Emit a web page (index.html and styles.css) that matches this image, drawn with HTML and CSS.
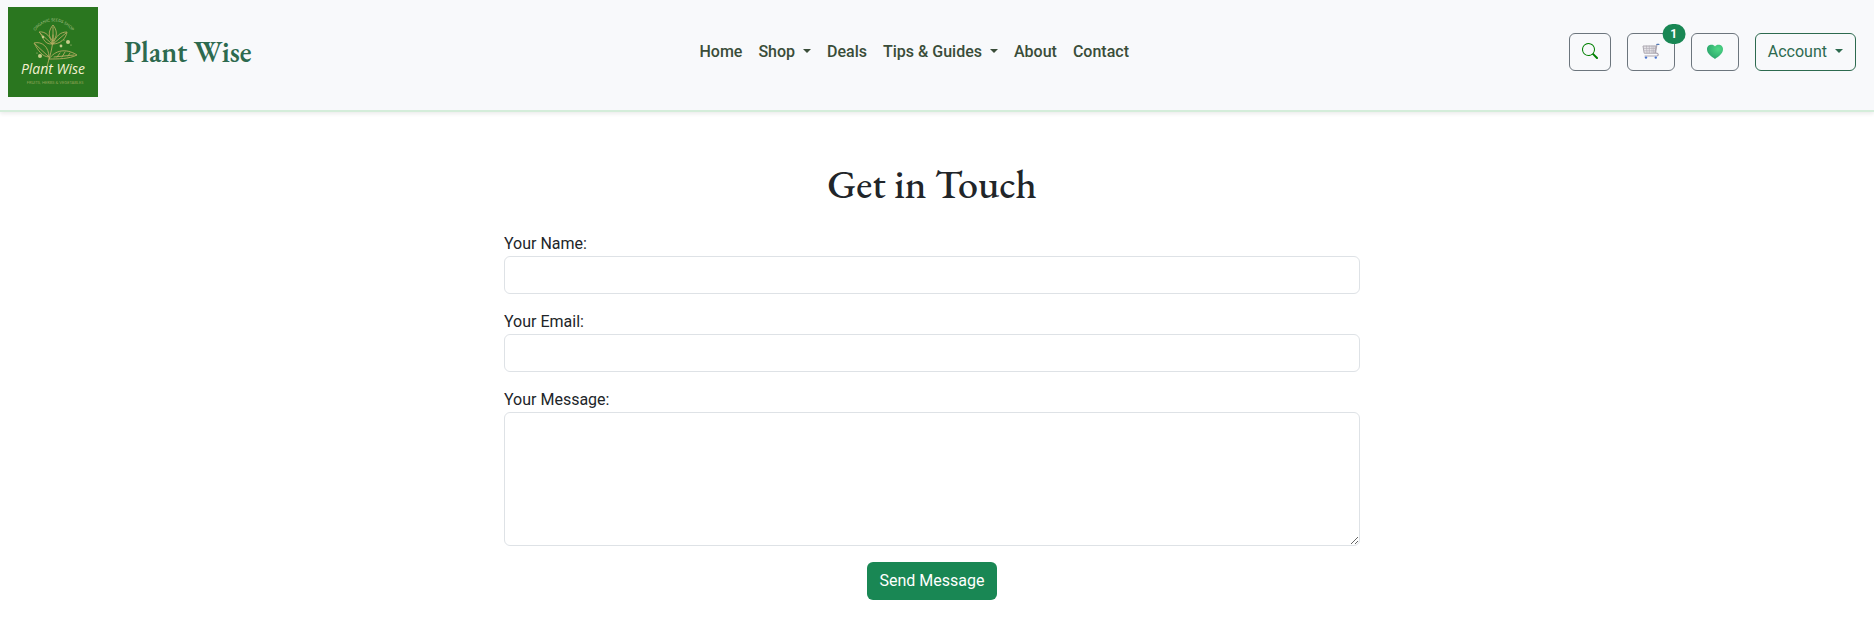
FILE: index.html
```html
<!DOCTYPE html>
<html lang="en">
<head>
    <meta charset="UTF-8">
    <meta name="viewport" content="width=device-width, initial-scale=1.0">
    <title>Plant Wise - Contact</title>
    <link rel="stylesheet" href="styles.css">
</head>
<body>
    <header class="navbar">
        <a class="navbar-brand" href="#">
            <svg class="logo" viewBox="0 0 90 90" role="img" aria-label="Plant Wise logo">
                <rect width="90" height="90" fill="#2a761f"/>
                <path id="arc" d="M26 26 A22 22 0 0 1 65 26" fill="none"/>
                <text class="logo-small" fill="#a9c088"><textPath href="#arc" startOffset="50%" text-anchor="middle">ORGANIC SEEDS SHOP</textPath></text>
                <!-- stem and leaves -->
                <g fill="none" stroke="#b5ab62" stroke-width="0.9" stroke-linecap="round">
                    <path d="M39 60 C41 50 45 43 45 28"/>
                    <path d="M45 34 C39 29 41 23 45 18 C49 23 50 29 45 34 M45 20 V34"/>
                    <path d="M44 37 C35 38 35 28 31 25 C38 24 43 30 44 37 M32 26 L44 37"/>
                    <path d="M45 37 C48 29 52 25 59 25 C58 32 52 37 45 37 M58 26 L45 37"/>
                    <path d="M41 50 C34 50 30 43 26 36 C34 34 41 40 41 50 M27 37 L41 50"/>
                    <path d="M41 52 C47 43 58 41 69 48 C61 52 50 52 41 52 M46 50 L66 48 M49 50 L52 46 M54 50 L57 45 M60 49 L62 46"/>
                </g>
                <g fill="#c5cc8a">
                    <circle cx="60" cy="35" r="2"/>
                    <circle cx="53" cy="39" r="1.4"/>
                    <circle cx="32" cy="49" r="2"/>
                    <circle cx="35" cy="30" r="1.2"/>
                    <circle cx="63" cy="38" r="0.6"/>
                    <circle cx="56" cy="33" r="0.6"/>
                    <circle cx="29" cy="46" r="0.6"/>
                </g>
                <text class="logo-script" x="45" y="67" text-anchor="middle" fill="#f3f0cf">Plant Wise</text>
                <text class="logo-small" x="47" y="77" text-anchor="middle" fill="#91a458">FRUITS, HERBS &amp; VEGETABLES</text>
            </svg>
            <span class="brand-name">Plant Wise</span>
        </a>

        <nav class="navbar-nav">
            <a class="nav-link" href="#">Home</a>
            <a class="nav-link dropdown-toggle" href="#">Shop</a>
            <a class="nav-link" href="#">Deals</a>
            <a class="nav-link dropdown-toggle" href="#">Tips &amp; Guides</a>
            <a class="nav-link" href="#">About</a>
            <a class="nav-link" href="#">Contact</a>
        </nav>

        <div class="navbar-actions">
            <button class="btn btn-outline" type="button" aria-label="Search">
                <svg width="16" height="16" viewBox="0 0 16 16" fill="#008000">
                    <path d="M11.742 10.344a6.5 6.5 0 1 0-1.397 1.398h-.001q.044.06.098.115l3.85 3.85a1 1 0 0 0 1.415-1.414l-3.85-3.85a1 1 0 0 0-.115-.1zM12 6.5a5.5 5.5 0 1 1-11 0 5.5 5.5 0 0 1 11 0"/>
                </svg>
            </button>
            <button class="btn btn-outline" type="button" aria-label="Cart">
                <svg width="22" height="16" viewBox="0 0 22 16" fill="none" stroke-linecap="round" stroke-linejoin="round">
                    <path d="M3.4 3 H16 L15 10.2 H4.6 Z" fill="#e8e6ea" stroke="#aaa6ae" stroke-width="1"/>
                    <path d="M6.5 3 L7 10 M9.3 3 V10 M12 3 V10 M14 3 L13.5 10 M3.7 5.4 H15.5 M4.2 7.8 H15" stroke="#b3afb7" stroke-width="0.7"/>
                    <path d="M18.4 1.5 H16.9 L15.4 10.2 C18.8 9.6 19 13 16.8 13 H5" stroke="#aba5b0" stroke-width="1.2"/>
                    <path d="M17 1.4 H18.8" stroke="#4f78b5" stroke-width="1.4"/>
                    <circle cx="6" cy="14.6" r="1.2" fill="#4c76cf"/>
                    <circle cx="15.8" cy="14.6" r="1.2" fill="#4c76cf"/>
                </svg>
                <span class="badge">1</span>
            </button>
            <button class="btn btn-outline" type="button" aria-label="Wishlist">
                <svg width="22" height="16" viewBox="0 0 22 16">
                    <defs>
                        <radialGradient id="heart" cx="0.7" cy="0.3" r="0.75">
                            <stop offset="0" stop-color="#4fd886"/>
                            <stop offset="1" stop-color="#2ba66c"/>
                        </radialGradient>
                    </defs>
                    <path d="M11 3.6 C9.6 .8 3 .9 3 6.2 C3 10.8 8 13.8 11 15.9 C14 13.8 19 10.8 19 6.2 C19 .9 12.4 .8 11 3.6 Z" fill="url(#heart)"/>
                </svg>
            </button>
            <button class="btn btn-account dropdown-toggle" type="button">Account</button>
        </div>
    </header>

    <main class="contact">
        <form class="contact-form">
            <h1>Get in Touch</h1>
            <div class="form-group">
                <label for="name">Your Name:</label>
                <input class="form-control" type="text" id="name" name="name">
            </div>
            <div class="form-group">
                <label for="email">Your Email:</label>
                <input class="form-control" type="email" id="email" name="email">
            </div>
            <div class="form-group">
                <label for="message">Your Message:</label>
                <textarea class="form-control" id="message" name="message" rows="5"></textarea>
            </div>
            <button class="btn btn-success" type="submit">Send Message</button>
        </form>
    </main>
</body>
</html>
```
FILE: styles.css
```css
:root {
    --primary-color: #2d6a4f;
    --success-color: #198754;
    --nav-color: #3a4d39;
    --text-color: #212529;
    --border-color: #dee2e6;
    --muted-color: #6c757d;
}

* {
    box-sizing: border-box;
}

body {
    margin: 0;
    background-color: #ffffff;
    color: var(--text-color);
    font-family: Roboto, sans-serif;
    font-size: 16px;
    line-height: 24px;
}

a {
    text-decoration: none;
}

/* Navbar */
.navbar {
    display: flex;
    align-items: center;
    justify-content: space-between;
    padding: 7px 18px 13px 8px;
    background-color: #f8f9fb;
    border-bottom: 2px solid #d4edda;
    box-shadow: 0 2px 4px rgba(0, 0, 0, 0.08);
}

.navbar-brand {
    display: flex;
    align-items: center;
    gap: 26px;
    padding-right: 8px;
    color: var(--primary-color);
}

.logo {
    display: block;
    width: 90px;
    height: 90px;
}

.logo-script {
    font: italic 500 14px "Open Sans", sans-serif;
}

.logo-small {
    font: 4px Lato, sans-serif;
}

.brand-name {
    font-family: "EB Garamond", "Liberation Serif", serif;
    font-size: 29px;
    font-weight: 600;
    line-height: 36px;
}

.navbar-nav {
    display: flex;
}

.nav-link {
    padding: 8px;
    color: var(--nav-color);
    font-weight: 500;
}

.dropdown-toggle::after {
    content: "";
    display: inline-block;
    margin-left: 8px;
    vertical-align: 4px;
    border-top: 4px solid;
    border-left: 4px solid transparent;
    border-right: 4px solid transparent;
}

.navbar-actions {
    display: flex;
    gap: 16px;
}

/* Buttons */
.btn {
    position: relative;
    padding: 6px 12px;
    border: 1px solid transparent;
    border-radius: 6px;
    background-color: transparent;
    font-family: inherit;
    font-size: 16px;
    line-height: 24px;
    cursor: pointer;
}

.btn svg {
    display: block;
    margin: 3px 0 5px;
}

.btn-outline {
    border-color: var(--muted-color);
}

.btn-account {
    border-color: var(--primary-color);
    color: var(--primary-color);
}

.btn-success {
    align-self: center;
    background-color: var(--success-color);
    color: #ffffff;
}

.badge {
    position: absolute;
    top: 0;
    left: 100%;
    transform: translate(-50%, -50%);
    padding: 4px 8px;
    border-radius: 10px;
    background-color: var(--success-color);
    color: #ffffff;
    font-size: 12px;
    font-weight: 700;
    line-height: 12px;
}

/* Contact form */
.contact {
    padding: 48px 22px 16px 12px;
}

.contact-form {
    display: flex;
    flex-direction: column;
    gap: 16px;
    max-width: 856px;
    margin: 0 auto;
}

.contact-form h1 {
    margin: 0 0 8px;
    font-family: "EB Garamond", "Liberation Serif", serif;
    font-size: 40px;
    font-weight: 500;
    line-height: 48px;
    text-align: center;
}

.form-group label {
    display: block;
}

.form-control {
    display: block;
    width: 100%;
    padding: 6px 12px;
    border: 1px solid var(--border-color);
    border-radius: 6px;
    background-color: #ffffff;
    color: var(--text-color);
    font-family: inherit;
    font-size: 16px;
    line-height: 24px;
}

textarea.form-control {
    resize: vertical;
}
```
